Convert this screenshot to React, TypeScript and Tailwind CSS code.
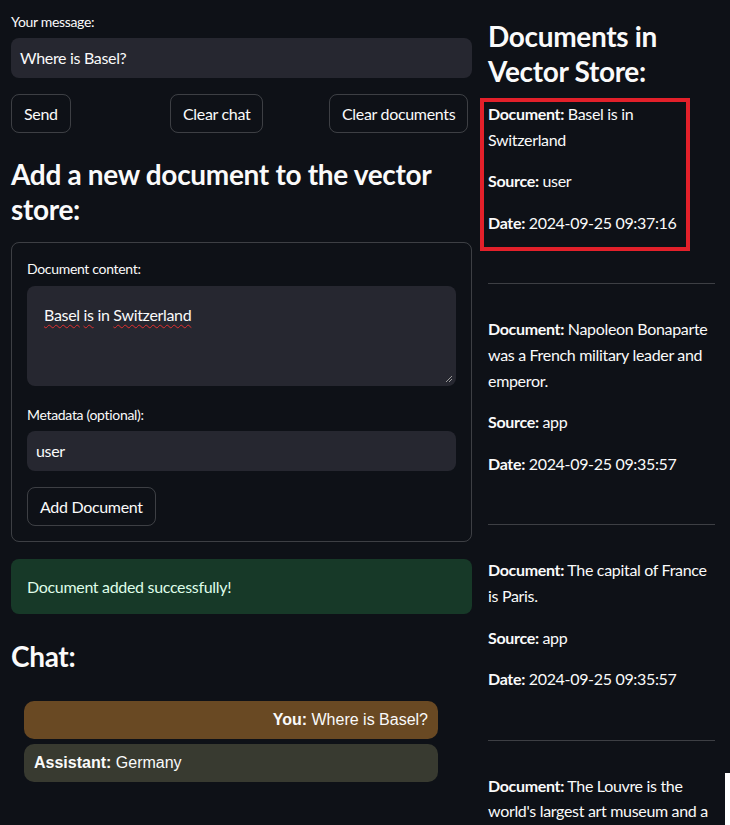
import React from "react";

const Btn = ({ children }: { children: React.ReactNode }) => (
  <div className="flex h-[39px] items-center whitespace-nowrap rounded-[8px] border border-[#fafafa33] px-[12px] text-[16px]">
    {children}
  </div>
);

const Lines = ({ lines }: { lines: React.ReactNode[] }) => (
  <p className="whitespace-nowrap">
    {lines.map((l, i) => (
      <React.Fragment key={i}>
        {i > 0 && <br />}
        {l}
      </React.Fragment>
    ))}
  </p>
);

const Doc = ({ lines, source, date }: { lines: React.ReactNode[]; source: string; date: string }) => (
  <div className="flex flex-col gap-[16px] text-[16px] leading-[25.6px]">
    <Lines lines={lines} />
    <p>
      <b>Source:</b> {source}
    </p>
    <p>
      <b>Date:</b> {date}
    </p>
  </div>
);

const Wavy = ({ children }: { children: React.ReactNode }) => (
  <span className="underline decoration-[#e03030] decoration-wavy decoration-1 underline-offset-[3px]">{children}</span>
);

export default function App() {
  return (
    <div
      className="relative h-[825px] w-[730px] overflow-hidden bg-[#0e1117] tracking-[-0.02em] text-[#fafafa]"
      style={{ fontFamily: "Lato, 'Noto Sans', sans-serif" }}
    >
      <div className="flex gap-[16px] pl-[11px]">
        {/* left column */}
        <div className="flex w-[461px] flex-col pt-[11px]">
          <div className="h-[22px] text-[14px] leading-[22px]">Your message:</div>
          <div className="mt-[5px] flex h-[40px] items-center rounded-[8px] bg-[#262730] px-[9px] text-[16px]">
            Where is Basel?
          </div>
          <div className="mt-[16px] grid grid-cols-3 gap-[16px]">
            <div className="flex">
              <Btn>Send</Btn>
            </div>
            <div className="flex">
              <Btn>Clear chat</Btn>
            </div>
            <div className="flex">
              <Btn>Clear documents</Btn>
            </div>
          </div>
          <h3 className="mt-[24px] text-[28px] font-bold leading-[35px]">
            Add a new document to the vector store:
          </h3>
          <div className="mt-[15px] flex flex-col rounded-[8px] border border-[#fafafa33] p-[15px]">
            <div className="h-[22px] text-[14px] leading-[22px]">Document content:</div>
            <div className="relative mt-[6px] h-[100px] rounded-[8px] bg-[#262730] px-[17px] py-[16px] text-[16px] leading-[25px]">
              <Wavy>Basel</Wavy> <Wavy>is</Wavy> in <Wavy>Switzerland</Wavy>
              <svg className="absolute bottom-[3px] right-[3px]" width="8" height="8" viewBox="0 0 8 8">
                <path d="M7 1 L1 7 M7 4 L4 7" stroke="#9a9a9a" strokeWidth="1" />
              </svg>
            </div>
            <div className="mt-[18px] h-[22px] text-[14px] leading-[22px]">Metadata (optional):</div>
            <div className="mt-[5px] flex h-[40px] items-center rounded-[8px] bg-[#262730] px-[9px] text-[16px]">
              user
            </div>
            <div className="mt-[16px] flex">
              <Btn>Add Document</Btn>
            </div>
          </div>
          <div className="mt-[17px] flex h-[55px] items-center rounded-[8px] bg-[#173928] px-[16px] text-[16px] text-[#dffde9]">
            Document added successfully!
          </div>
          <h3 className="mt-[25px] text-[28px] font-bold leading-[35px]">Chat:</h3>
          <div
            className="ml-[13px] mt-[27px] flex w-[414px] flex-col gap-[5px] text-[16px] tracking-normal"
            style={{ fontFamily: "'Liberation Sans', Arial, sans-serif" }}
          >
            <div className="flex h-[38px] items-center justify-end rounded-[10px] bg-[#694923] px-[10px]">
              <span>
                <b>You:</b> Where is Basel?
              </span>
            </div>
            <div className="flex h-[38px] items-center rounded-[10px] bg-[#383a30] px-[10px]">
              <span>
                <b>Assistant:</b> Germany
              </span>
            </div>
          </div>
        </div>

        {/* right column */}
        <div className="flex w-[227px] flex-col pt-[19px]">
          <h3 className="text-[28px] font-bold leading-[35px]">
            Documents in
            <br />
            Vector Store:
          </h3>
          <div className="relative mt-[12px]">
            <div className="absolute left-[-8px] top-[-3px] h-[153px] w-[210px] border-[4px] border-[#e3202a]" />
            <Doc
              lines={[
                <>
                  <b>Document:</b> Basel is in
                </>,
                "Switzerland",
              ]}
              source="user"
              date="2024-09-25 09:37:16"
            />
          </div>
          <hr className="mb-[32px] mt-[48px] border-t border-[#fafafa33]" />
          <Doc
            lines={[
              <>
                <b>Document:</b> Napoleon Bonaparte
              </>,
              "was a French military leader and",
              "emperor.",
            ]}
            source="app"
            date="2024-09-25 09:35:57"
          />
          <hr className="mb-[32px] mt-[48px] border-t border-[#fafafa33]" />
          <Doc
            lines={[
              <>
                <b>Document:</b> The capital of France
              </>,
              "is Paris.",
            ]}
            source="app"
            date="2024-09-25 09:35:57"
          />
          <hr className="mb-[32px] mt-[48px] border-t border-[#fafafa33]" />
          <div className="text-[16px] leading-[25.6px]">
            <Lines
              lines={[
                <>
                  <b>Document:</b> The Louvre is the
                </>,
                "world's largest art museum and a",
              ]}
            />
          </div>
        </div>
      </div>
      <div className="absolute right-0 top-[773px] h-[52px] w-[5px] bg-white" />
    </div>
  );
}
